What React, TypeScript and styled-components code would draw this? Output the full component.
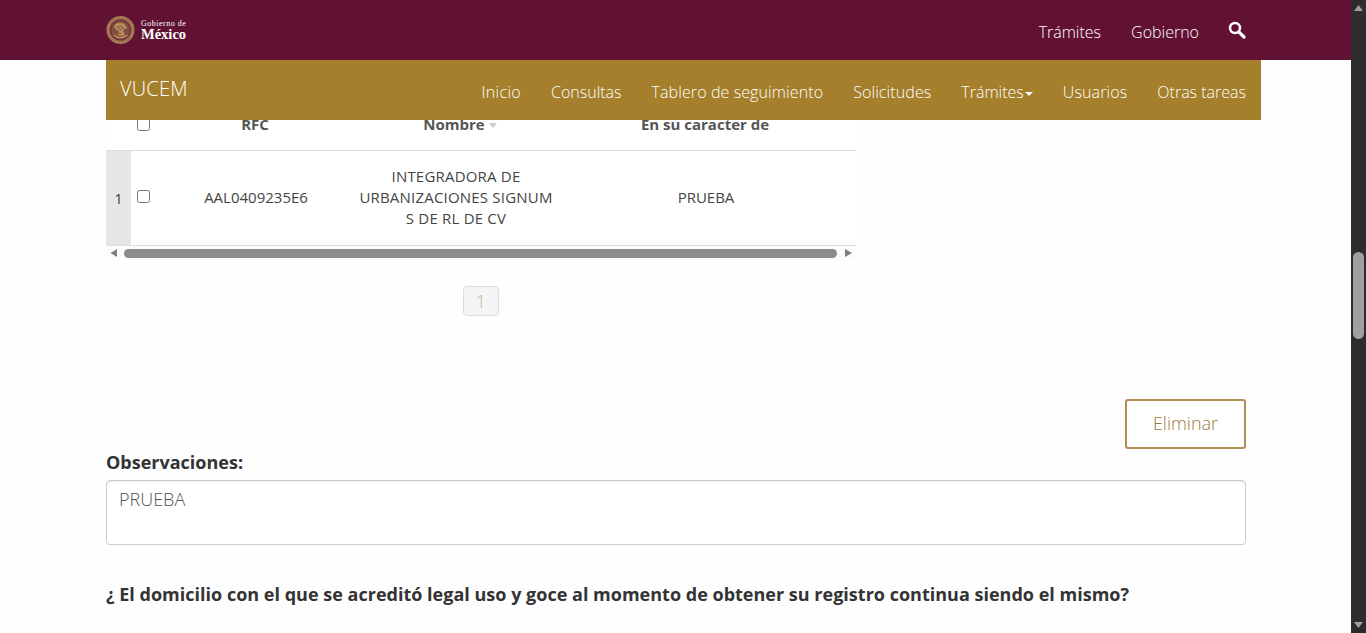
import React from "react";
import styled, { createGlobalStyle } from "styled-components";

const Global = createGlobalStyle`
  html, body { margin: 0; padding: 0; height: 100%; overflow: hidden; background: #fff; }
  #root { height: 100%; }
  * { box-sizing: border-box; }
`;

const Screen = styled.div`
  display: flex;
  width: 1366px;
  height: 633px;
  overflow: hidden;
  font-family: "Open Sans", "Liberation Sans", sans-serif;
  color: #333;
`;

const Viewport = styled.div`
  position: relative;
  width: 1351px;
  height: 633px;
  overflow: hidden;
  background: #fefefe;
`;

const TopBars = styled.header`
  position: absolute;
  top: 0;
  left: 0;
  right: 0;
  z-index: 5;
`;

const GovBar = styled.div`
  height: 60px;
  background: #611232;
  padding: 0 105px 0 106px;
  display: flex;
  align-items: center;
  justify-content: space-between;
`;

const Logo = styled.div`
  display: flex;
  align-items: center;
  gap: 6px;
  margin-top: -1px;
`;

const LogoWords = styled.div`
  display: flex;
  flex-direction: column;
  font-family: "Liberation Serif", serif;
  color: #fff;
`;

const LogoSmall = styled.span`
  font-size: 8px;
  line-height: 8px;
  letter-spacing: 0.5px;
`;

const LogoBig = styled.span`
  font-size: 14.5px;
  line-height: 12px;
  font-weight: 700;
`;

const GovLinks = styled.nav`
  display: flex;
  align-items: center;
  gap: 30px;
  font-size: 16px;
  font-weight: 300;
  color: #fff;
  margin-top: 3px;
`;

const SearchGlyph = styled.svg`
  width: 18px;
  height: 18px;
  margin: -4px 0 0 -1px;
`;

const AppBar = styled.div`
  width: 1155px;
  height: 60px;
  margin-left: 106px;
  background: #a57f2c;
  padding: 0 15px 0 14px;
  display: flex;
  align-items: center;
  justify-content: space-between;
  color: #fff;
`;

const Brand = styled.span`
  font-size: 20px;
  font-weight: 300;
  margin-top: -3px;
  letter-spacing: 0.2px;
`;

const AppLinks = styled.nav`
  display: flex;
  align-items: center;
  gap: 30px;
  font-size: 16px;
  font-weight: 300;
  margin-top: 4px;
`;

const AppLink = styled.span<{ $track?: number }>`
  letter-spacing: ${(p) => p.$track ?? 0}px;
`;

const Caret = styled.span`
  display: inline-block;
  width: 0;
  height: 0;
  margin-left: 1px;
  vertical-align: middle;
  border-top: 4px solid #fff;
  border-left: 4px solid transparent;
  border-right: 4px solid transparent;
`;

const Main = styled.main`
  padding: 110px 105px 0 106px;
`;

const Grid = styled.div`
  width: 750px;
`;

const HeadRow = styled.div`
  display: grid;
  grid-template-columns: 25px 50px 150px 250px 250px 25px;
  height: 41px;
  align-items: end;
  padding-bottom: 16px;
  background: #fff;
  border-bottom: 1px solid #ddd;
  font-size: 15px;
  line-height: 20px;
  font-weight: 700;
  color: #555;
  text-align: center;
`;

const HeadLabel = styled.span<{ $sorted?: boolean }>`
  padding: ${(p) => (p.$sorted ? "0 0 0 8px" : "0 2px 0 0")};
`;

const DataRow = styled.div`
  display: grid;
  grid-template-columns: 25px 50px 150px 250px 250px 25px;
  height: 95px;
  align-items: center;
  background: #fff;
  border-bottom: 1px solid #ddd;
  font-size: 15px;
  line-height: 21px;
  color: #444;
  text-align: center;
`;

const RowNumber = styled.div`
  height: 100%;
  background: #e6e6e6;
  display: flex;
  align-items: center;
  justify-content: center;
  padding-top: 1px;
`;

const CheckCell = styled.div<{ $up?: boolean }>`
  display: flex;
  justify-content: flex-start;
  padding-left: 6px;
  margin-bottom: ${(p) => (p.$up ? "3px" : "0")};
`;

const Check = styled.span<{ $up?: boolean }>`
  display: block;
  width: 13px;
  height: 13px;
  margin-top: ${(p) => (p.$up ? "0" : "-3px")};
  background: #fff;
  border: 1px solid #767676;
  border-radius: 2.5px;
`;

const CellText = styled.div`
  margin-top: -2px;
`;

const NameCell = styled(CellText)`
  padding: 0 25px;
  letter-spacing: 0.2px;
`;

const SortMark = styled.span`
  display: inline-block;
  width: 0;
  height: 0;
  margin-left: 4px;
  vertical-align: 2px;
  border-top: 5px solid #ccc;
  border-left: 4px solid transparent;
  border-right: 4px solid transparent;
`;

const HScroll = styled.div`
  display: flex;
  align-items: center;
  height: 14px;
  background: #fcfcfc;
`;

const ArrowBtn = styled.svg<{ $wide?: boolean }>`
  flex: none;
  width: ${(p) => (p.$wide ? "19px" : "18px")};
  height: 14px;
`;

const HThumb = styled.div`
  flex: 1;
  height: 9px;
  border-radius: 5px;
  background: #8b8b8b;
`;

const Pager = styled.div`
  display: flex;
  justify-content: center;
  padding-top: 26px;
`;

const PageChip = styled.span`
  width: 36px;
  height: 30px;
  border: 1px solid #ddd;
  border-radius: 4px;
  background: #f5f5f5;
  color: #b9b98f;
  font-size: 18px;
  font-weight: 300;
  display: flex;
  align-items: center;
  justify-content: center;
`;

const Actions = styled.div`
  display: flex;
  justify-content: flex-end;
  margin-top: 83px;
`;

const GhostButton = styled.button`
  width: 121px;
  height: 50px;
  border: 2px solid #b28e55;
  border-radius: 3px;
  background: #fff;
  color: #9c7a3c;
  font-family: inherit;
  font-size: 18px;
  font-weight: 300;
  padding: 0 0 2px;
`;

const FieldLabel = styled.div`
  margin-top: 1px;
  font-size: 18px;
  line-height: 24px;
  font-weight: 700;
  color: #333;
`;

const TextBox = styled.div`
  height: 65px;
  margin-top: 6px;
  padding: 6px 12px;
  background: #fff;
  border: 1px solid #ccc;
  border-radius: 4px;
  box-shadow: inset 0 1px 1px rgba(0, 0, 0, 0.075);
  font-size: 18px;
  line-height: 24px;
  font-weight: 300;
  color: #555;
`;

const Question = styled.p`
  margin: 37px 0 0;
  font-size: 18px;
  line-height: 24px;
  font-weight: 700;
  color: #333;
  letter-spacing: 0.01px;
`;

const Scrollbar = styled.aside`
  position: relative;
  width: 15px;
  height: 633px;
  background: #2c2c2c;
`;

const ScrollArrow = styled.svg<{ $bottom?: boolean }>`
  position: absolute;
  left: 3px;
  width: 9px;
  height: 6px;
  ${(p) => (p.$bottom ? "bottom: 5px;" : "top: 5px;")}
`;

const ScrollThumb = styled.div`
  position: absolute;
  left: 2px;
  top: 252px;
  width: 11px;
  height: 87px;
  border-radius: 6px;
  background: #9f9f9f;
`;

function Seal() {
  const rays = Array.from({ length: 40 }, (_, i) => (i * 360) / 40);
  return (
    <svg width="29" height="30" viewBox="0 0 29 30" aria-hidden="true">
      <circle cx="14.5" cy="15" r="14" fill="#93664a" />
      <g stroke="#bf9460" strokeWidth="0.9">
        {rays.map((a) => (
          <line key={a} x1="14.5" y1="1.2" x2="14.5" y2="3.4" transform={`rotate(${a} 14.5 15)`} />
        ))}
      </g>
      <circle cx="14.5" cy="15" r="10.6" fill="#74303a" />
      <circle cx="14.5" cy="15" r="9.2" fill="#824e42" />
      <path d="M8 11c2-3 5-4 8-3 3 1 5 3 5 6-2-1-3 0-4 2l2 4c-2 1-5 1-7 0l1-4c-2 0-4-2-5-5z" fill="#b58e5c" />
      <path d="M11 12l4-1 2 2-3 2zM12 18l3 .5" stroke="#7a4038" strokeWidth="0.8" fill="none" />
      <path d="M7.5 20c3.5 3.4 10.500 3.400 14 0" stroke="#bf9460" strokeWidth="1.300" fill="none" />
    </svg>
  );
}

export default function App() {
  return (
    <>
      <Global />
      <Screen>
        <Viewport>
          <TopBars>
            <GovBar>
              <Logo>
                <Seal />
                <LogoWords>
                  <LogoSmall>Gobierno de</LogoSmall>
                  <LogoBig>México</LogoBig>
                </LogoWords>
              </Logo>
              <GovLinks>
                <span>Trámites</span>
                <span>Gobierno</span>
                <SearchGlyph viewBox="0 0 18 18" aria-hidden="true">
                  <circle cx="7" cy="7" r="5" fill="none" stroke="#fff" strokeWidth="2.5" />
                  <line x1="10.8" y1="10.8" x2="16" y2="16" stroke="#fff" strokeWidth="3.2" strokeLinecap="round" />
                </SearchGlyph>
              </GovLinks>
            </GovBar>
            <AppBar>
              <Brand>VUCEM</Brand>
              <AppLinks>
                <AppLink $track={0.3}>Inicio</AppLink>
                <AppLink>Consultas</AppLink>
                <AppLink $track={0.1}>Tablero de seguimiento</AppLink>
                <AppLink $track={0.1}>Solicitudes</AppLink>
                <AppLink>
                  Trámites
                  <Caret />
                </AppLink>
                <AppLink $track={0.12}>Usuarios</AppLink>
                <AppLink>Otras tareas</AppLink>
              </AppLinks>
            </AppBar>
          </TopBars>
          <Main>
            <Grid>
              <HeadRow>
                <span />
                <CheckCell $up>
                  <Check $up />
                </CheckCell>
                <HeadLabel>RFC</HeadLabel>
                <HeadLabel $sorted>
                  Nombre
                  <SortMark />
                </HeadLabel>
                <HeadLabel>En su caracter de</HeadLabel>
                <span />
              </HeadRow>
              <DataRow>
                <RowNumber>1</RowNumber>
                <CheckCell>
                  <Check />
                </CheckCell>
                <CellText>AAL0409235E6</CellText>
                <NameCell>INTEGRADORA DE URBANIZACIONES SIGNUM S DE RL DE CV</NameCell>
                <CellText>PRUEBA</CellText>
                <span />
              </DataRow>
              <HScroll>
                <ArrowBtn viewBox="0 0 18 14" aria-hidden="true">
                  <path d="M4.500 7L11 3v8z" fill="#7f7f7f" />
                </ArrowBtn>
                <HThumb />
                <ArrowBtn $wide viewBox="0 0 19 14" aria-hidden="true">
                  <path d="M15 7L8 3v8z" fill="#7f7f7f" />
                </ArrowBtn>
              </HScroll>
              <Pager>
                <PageChip>1</PageChip>
              </Pager>
            </Grid>
            <Actions>
              <GhostButton>Eliminar</GhostButton>
            </Actions>
            <FieldLabel>Observaciones:</FieldLabel>
            <TextBox>PRUEBA</TextBox>
            <Question>¿ El domicilio con el que se acreditó legal uso y goce al momento de obtener su registro continua siendo el mismo?</Question>
          </Main>
        </Viewport>
        <Scrollbar>
          <ScrollArrow viewBox="0 0 9 6" aria-hidden="true">
            <path d="M4.500 0L9 6H0z" fill="#9f9f9f" />
          </ScrollArrow>
          <ScrollThumb />
          <ScrollArrow $bottom viewBox="0 0 9 6" aria-hidden="true">
            <path d="M4.500 6L0 0h9z" fill="#9f9f9f" />
          </ScrollArrow>
        </Scrollbar>
      </Screen>
    </>
  );
}
